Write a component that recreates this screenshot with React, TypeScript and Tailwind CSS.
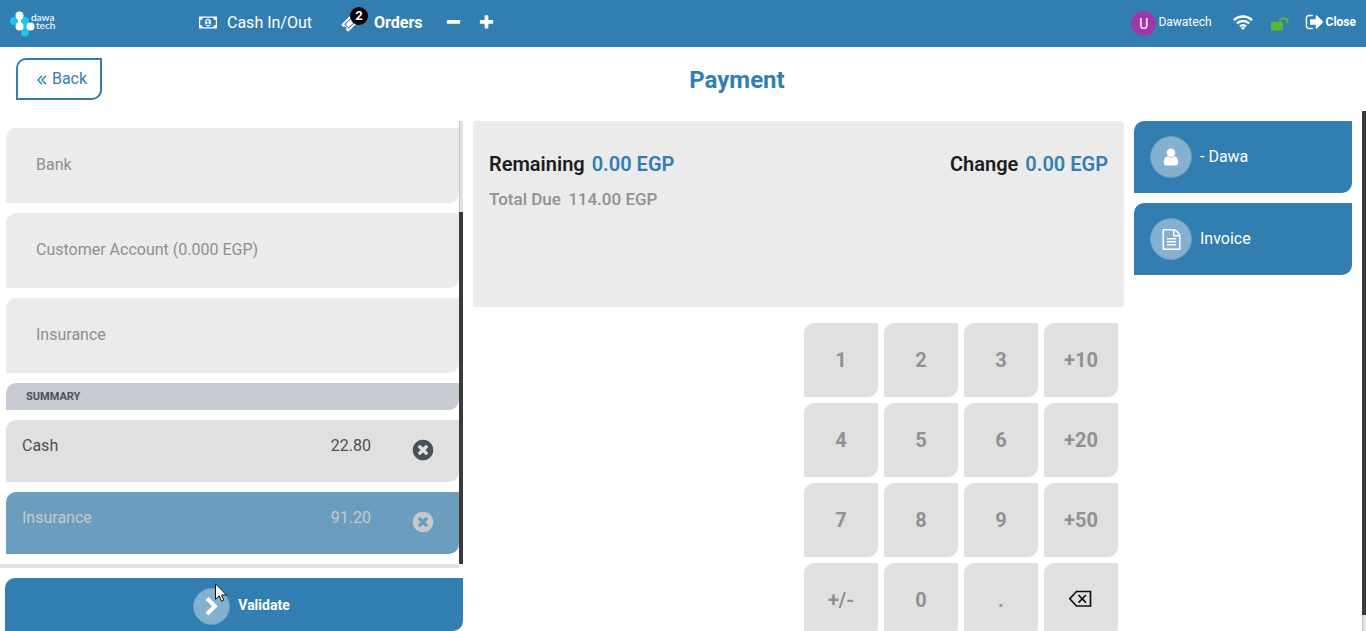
import React, { useState } from "react";
import { clsx } from "clsx";

type GlyphProps = { d: string; box?: string; className?: string };

function Glyph({ d, box = "0 0 1792 1792", className }: GlyphProps) {
  return (
    <svg viewBox={box} fill="currentColor" aria-hidden="true" className={clsx("shrink-0", className)}>
      <path d={d} />
    </svg>
  );
}

const MONEY =
  "M768 1152h384v-96h-128v-448h-114l-148 137 77 80q42-37 55-57h2v288h-128v96zm512-256q0 70-21 142t-59.5 134-101.5 101-138 39-138-39-101.5-101-59.5-134-21-142 21-142 59.5-134 101.5-101 138-39 138 39 101.5 101 59.5 134 21 142zm512 256v-512q-106 0-181-75t-75-181h-1152q0 106-75 181t-181 75v512q106 0 181 75t75 181h1152q0-106 75-181t181-75zm128-832v1152q0 26-19 45t-45 19h-1792q-26 0-45-19t-19-45v-1152q0-26 19-45t45-19h1792q26 0 45 19t19 45z";
const TICKET =
  "M1024 452l316 316-572 572-316-316zm-211 979l618-618q19-19 19-45t-19-45l-362-362q-18-18-45-18t-45 18l-618 618q-19 19-19 45t19 45l362 362q18 18 45 18t45-18zm889-637l-907 908q-37 37-90.5 37t-90.5-37l-126-126q56-56 56-136t-56-136-136-56-136 56l-125-126q-37-37-37-90.5t37-90.5l907-906q37-37 90.5-37t90.5 37l125 125q-56 56-56 136t56 136 136 56 136-56l126 125q37 37 37 90.5t-37 90.5z";
const MINUS =
  "M1600 736v192q0 40-28 68t-68 28h-1216q-40 0-68-28t-28-68v-192q0-40 28-68t68-28h1216q40 0 68 28t28 68z";
const PLUS =
  "M1600 736v192q0 40-28 68t-68 28h-416v416q0 40-28 68t-68 28h-192q-40 0-68-28t-28-68v-416h-416q-40 0-68-28t-28-68v-192q0-40 28-68t68-28h416v-416q0-40 28-68t68-28h192q40 0 68 28t28 68v416h416q40 0 68 28t28 68z";
const SIGN_OUT =
  "M704 1440q0 4 1 20t.5 26.5-3 23.5-10 19.5-20.5 6.5h-320q-119 0-203.5-84.5t-84.5-203.5v-704q0-119 84.5-203.5t203.5-84.5h320q13 0 22.5 9.5t9.5 22.5q0 4 1 20t.5 26.5-3 23.5-10 19.5-20.5 6.5h-320q-66 0-113 47t-47 113v704q0 66 47 113t113 47h312l11.5 1 11.5 3 8 5.5 7 9 2 13.5zm928-544q0 26-19 45l-544 544q-19 19-45 19t-45-19-19-45v-288h-448q-26 0-45-19t-19-45v-384q0-26 19-45t45-19h448v-288q0-26 19-45t45-19 45 19l544 544q19 19 19 45z";
const USER =
  "M1536 1399q0 109-62.5 187t-150.5 78h-854q-88 0-150.5-78t-62.5-187q0-85 8.5-160.5t31.5-152 58.5-131 94-89 134.5-34.5q131 128 313 128t313-128q76 0 134.5 34.5t94 89 58.5 131 31.5 152 8.5 160.5zm-256-887q0 159-112.5 271.5t-271.5 112.5-271.5-112.5-112.5-271.5 112.5-271.5 271.5-112.5 271.5 112.5 112.5 271.5z";
const FILE_TEXT =
  "M1596 380q28 28 48 76t20 88v1152q0 40-28 68t-68 28h-1344q-40 0-68-28t-28-68v-1600q0-40 28-68t68-28h896q40 0 88 20t76 48zm-444-244v376h376q-10-29-22-41l-313-313q-12-12-41-22zm384 1528v-1024h-416q-40 0-68-28t-28-68v-416h-768v1536h1280zm-1024-864q0-14 9-23t23-9h704q14 0 23 9t9 23v64q0 14-9 23t-23 9h-704q-14 0-23-9t-9-23v-64zm736 224q14 0 23 9t9 23v64q0 14-9 23t-23 9h-704q-14 0-23-9t-9-23v-64q0-14 9-23t23-9h704zm0 256q14 0 23 9t9 23v64q0 14-9 23t-23 9h-704q-14 0-23-9t-9-23v-64q0-14 9-23t23-9h704z";
const TIMES_CIRCLE =
  "M1277 1122q0-26-19-45l-181-181 181-181q19-19 19-45 0-27-19-46l-90-90q-19-19-46-19-26 0-45 19l-181 181-181-181q-19-19-45-19-27 0-46 19l-90 90q-19 19-19 46 0 26 19 45l181 181-181 181q-19 19-19 45 0 27 19 46l90 90q19 19 46 19 26 0 45-19l181-181 181 181q19 19 45 19 27 0 46-19l90-90q19-19 19-46zm387-226q0 209-103 385.5t-279.5 279.5-385.5 103-385.5-103-279.5-279.5-103-385.5 103-385.5 279.5-279.5 385.5-103 385.5 103 279.5 279.5 103 385.5z";
const CHEVRON_RIGHT =
  "M1363 877l-742 742q-19 19-45 19t-45-19l-166-166q-19-19-19-45t19-45l531-531-531-531q-19-19-19-45t19-45l166-166q19-19 45-19t45 19l742 742q19 19 19 45t-19 45z";

function Logo() {
  return (
    <a href="#home" aria-label="dawa tech" className="flex w-[199px] items-center pl-[9px] text-white">
      <svg viewBox="0 0 26 26" aria-hidden="true" className="h-[26px] w-[26px] shrink-0">
        <path d="M5 10h6M16 10v6M16 16v6" fill="none" stroke="#1fc3f0" strokeWidth="5" />
        <path d="M10.500 4v12" stroke="#fff" strokeWidth="6" />
        <circle cx="5" cy="10" r="4" fill="#1fc3f0" />
        <circle cx="16" cy="10" r="4" fill="#1fc3f0" />
        <circle cx="16" cy="21.500" r="4" fill="#1fc3f0" />
        <circle cx="10.500" cy="4.500" r="4" fill="#fff" />
        <circle cx="10.500" cy="15.500" r="4" fill="#fff" />
        <circle cx="21.500" cy="15.500" r="4" fill="#fff" />
      </svg>
      <span className="-ml-1 flex flex-col pb-[6px] font-['Lato',sans-serif] text-[10px] leading-[8px] font-medium">
        <span>dawa</span>
        <span className="pl-[5px]">tech</span>
      </span>
    </a>
  );
}

function WifiIcon() {
  return (
    <svg viewBox="0 0 20 15" fill="none" stroke="currentColor" strokeWidth="2.400" aria-hidden="true" className="h-[15px] w-5">
      <path d="M.9 5.200a13 13 0 0 1 18.200 0M3.900 8.400a8.800 8.800 0 0 1 12.200 0M6.900 11.400a4.600 4.600 0 0 1 6.200 0" />
      <path d="M10 15l-2-2a2.800 2.800 0 0 1 4 0z" fill="currentColor" stroke="none" />
    </svg>
  );
}

function UnlockIcon() {
  return (
    <svg viewBox="0 0 18 15" aria-hidden="true" className="h-[15px] w-[18px] text-[#5cb631]">
      <path d="M0 6h12v8.500H0z" fill="currentColor" />
      <path d="M9 6V4.500a4 3.500 0 0 1 7.500 0V7" fill="none" stroke="currentColor" strokeWidth="2" />
    </svg>
  );
}

function Header() {
  return (
    <header className="flex h-[47px] shrink-0 items-center bg-[#337eb0] text-base text-white">
      <Logo />
      <nav className="flex h-full flex-1 items-center">
        <button type="button" className="flex items-center gap-[10px] pb-[2px]">
          <Glyph d={MONEY} box="0 0 1920 1792" className="h-[17px] w-[18px]" />
          Cash In/Out
        </button>
        <button type="button" className="ml-[29px] flex items-center gap-[15px] pb-[2px] font-bold">
          <span className="relative">
            <Glyph d={TICKET} className="h-[18px] w-[18px]" />
            <span className="absolute -top-[7px] left-[9px] flex h-[18px] w-[18px] items-center justify-center rounded-full bg-black text-[13px]">
              2
            </span>
          </span>
          Orders
        </button>
        <button type="button" aria-label="Remove order" className="ml-[23px] pb-[2px]">
          <Glyph d={MINUS} className="h-[17px] w-[17px]" />
        </button>
        <button type="button" aria-label="New order" className="ml-4 pb-[2px]">
          <Glyph d={PLUS} className="h-[17px] w-[17px]" />
        </button>
      </nav>
      <div className="flex items-center pr-[10px] text-xs">
        <span className="flex h-[25px] w-[25px] items-center justify-center rounded-full bg-[#a238a8] text-sm">U</span>
        <span className="ml-[2px] pb-[3px]">Dawatech</span>
        <span className="ml-[21px] pb-[3px]">
          <WifiIcon />
        </span>
        <span className="ml-[18px]">
          <UnlockIcon />
        </span>
        <button type="button" className="ml-4 flex items-center gap-[1px] pb-[3px] font-bold">
          <Glyph d={SIGN_OUT} className="h-5 w-5" />
          Close
        </button>
      </div>
    </header>
  );
}

const METHODS = ["Bank", "Customer Account (0.000 EGP)", "Insurance"];
const LINES = [
  { name: "Cash", amount: "22.80" },
  { name: "Insurance", amount: "91.20" },
];

function PaymentLines() {
  const [selected, setSelected] = useState(1);
  return (
    <section className="flex w-[463px] shrink-0 flex-col">
      <div className="flex min-h-0 flex-1">
        <div className="flex min-w-0 flex-1 flex-col gap-[10px] pt-[7px] pl-[6px]">
          {METHODS.map((method) => (
            <button
              key={method}
              type="button"
              className="h-[75px] shrink-0 rounded-tl-[10px] rounded-br-[10px] bg-[#ebebeb] px-[30px] pb-[2px] text-left text-[#8f8f8f]"
            >
              {method}
            </button>
          ))}
          <h2 className="flex h-[27px] shrink-0 items-center rounded-tl-[10px] rounded-br-[10px] bg-[#c8cbd4] px-5 pt-[1px] text-[11px] font-bold text-[#4b4f5a]">
            SUMMARY
          </h2>
          {LINES.map((line, index) => (
            <div
              key={line.name}
              onClick={() => setSelected(index)}
              className={clsx(
                "flex h-[62px] shrink-0 rounded-tl-[10px] rounded-br-[10px] pr-6 pl-4",
                index === selected ? "bg-[#6b9dbf] text-[#c8c8c8]" : "bg-[#e0e0e0] text-[#495057]",
              )}
            >
              <span className="flex-1 pt-[14px]">{line.name}</span>
              <span className="pt-[14px]">{line.amount}</span>
              <button type="button" aria-label={`Delete ${line.name}`} className="ml-10 pb-[2px]">
                <Glyph d={TIMES_CIRCLE} className="h-6 w-6" />
              </button>
            </div>
          ))}
        </div>
        <div className="w-1 shrink-0 bg-[#e1e2e6]">
          <div className="h-[91px] border-l border-[#c4c5cc]" />
          <div className="h-[calc(100%-91px)] bg-[#3a3a3a]" />
        </div>
      </div>
      <div className="mr-1 h-1 shrink-0 bg-[#e1e2e6]" />
      <div className="relative mt-[10px] ml-[5px] shrink-0">
        <button
          type="button"
          className="flex h-[53px] w-full items-center justify-center gap-2 rounded-tl-[10px] rounded-br-[10px] bg-[#337eb0] pl-[15px] text-sm font-bold text-white"
        >
          <span className="mt-1 flex h-[37px] w-[37px] items-center justify-center rounded-full border border-[#6d9cbd] bg-[#84b1d0]">
            <Glyph d={CHEVRON_RIGHT} className="h-5 w-5" />
          </span>
          Validate
        </button>
        <svg viewBox="0 0 12 20" aria-hidden="true" className="absolute top-[5px] left-[210px] h-5 w-3">
          <path d="M.5.8v15.500l3.700-3.500 2.300 5.400 2.300-1-2.300-5.200h5z" fill="#fff" stroke="#111" strokeLinejoin="round" />
        </svg>
      </div>
    </section>
  );
}

const KEYS = ["1", "2", "3", "+10", "4", "5", "6", "+20", "7", "8", "9", "+50", "+/-", "0", "."];
const KEY_STYLE =
  "flex h-[74px] items-center justify-center rounded-tl-[10px] rounded-br-[10px] bg-[#e0e0e0] text-xl font-bold text-[#919191]";

function Center() {
  return (
    <section className="flex min-w-0 flex-1 flex-col gap-4">
      <div className="h-[186px] shrink-0 rounded bg-[#ebebeb] px-4 pt-7">
        <div className="flex justify-between text-xl leading-[30px] font-semibold text-[#1c1c22]">
          <p>
            Remaining <span className="ml-[2px] text-[#337eb0]">0.00 EGP</span>
          </p>
          <p>
            Change <span className="ml-[2px] text-[#337eb0]">0.00 EGP</span>
          </p>
        </div>
        <p className="mt-[7px] text-[17px] leading-[26px] font-medium text-[#919191]">
          Total Due <span className="ml-[3px]">114.00 EGP</span>
        </p>
      </div>
      <div className="mr-[6px] grid w-[314px] shrink-0 grid-cols-4 gap-[6px] self-end">
        {KEYS.map((key) => (
          <button key={key} type="button" className={KEY_STYLE}>
            {key}
          </button>
        ))}
        <button type="button" aria-label="Backspace" className={KEY_STYLE}>
          <svg viewBox="0 0 24 18" fill="none" stroke="#111" strokeWidth="1.700" aria-hidden="true" className="mr-[2px] mb-[2px] h-[18px] w-6">
            <path d="M8.500 1.500h14v14.500h-14L1.800 8.800zM10.500 5l7.500 7.600M18 5l-7.500 7.600" />
          </svg>
        </button>
      </div>
    </section>
  );
}

function SideButton({ icon, iconClass, label }: { icon: string; iconClass: string; label: string }) {
  return (
    <button
      type="button"
      className="flex h-[72px] shrink-0 items-center gap-2 rounded-tl-[10px] rounded-br-[10px] bg-[#337eb0] px-4 text-white"
    >
      <span className="flex h-[42px] w-[42px] items-center justify-center rounded-full border border-[#6d9cbd] bg-[#84b1d0]">
        <Glyph d={icon} className={iconClass} />
      </span>
      <span>{label}</span>
    </button>
  );
}

export default function App() {
  return (
    <div className="flex h-screen flex-col overflow-hidden bg-white font-['Roboto',sans-serif] text-base">
      <Header />
      <div className="grid h-16 shrink-0 grid-cols-[auto_1fr] items-start pl-4">
        <button
          type="button"
          className="mt-[11px] flex h-[42px] w-[86px] items-center justify-center gap-[5px] rounded-tl-[10px] rounded-br-[10px] border-2 border-[#337eb0] pl-[6px] text-[#337eb0]"
        >
          <svg viewBox="0 0 10 10" fill="none" stroke="currentColor" aria-hidden="true" className="mt-[2px] h-[10px] w-[10px]">
            <path d="M5 .8L1 5l4 4.200M9 .8L5 5l4 4.200" strokeWidth="1.400" />
          </svg>
          Back
        </button>
        <h1 className="mt-[15px] pl-[6px] text-center text-2xl leading-9 font-bold text-[#337eb0]">Payment</h1>
      </div>
      <main className="flex min-h-0 flex-1">
        <div className="flex min-w-0 flex-1 gap-[10px] overflow-hidden pt-[10px] pr-[10px]">
          <PaymentLines />
          <Center />
          <aside className="flex w-[218px] shrink-0 flex-col gap-[10px]">
            <SideButton icon={USER} iconClass="h-5 w-5" label="- Dawa" />
            <SideButton icon={FILE_TEXT} iconClass="h-[21px] w-[21px]" label="Invoice" />
          </aside>
        </div>
        <div className="flex w-1 shrink-0 flex-col bg-[#e1e2e6]">
          <div className="flex-1 bg-[#3a3a3a]" />
          <div className="h-4 border-l border-[#c4c5cc]" />
        </div>
      </main>
    </div>
  );
}
